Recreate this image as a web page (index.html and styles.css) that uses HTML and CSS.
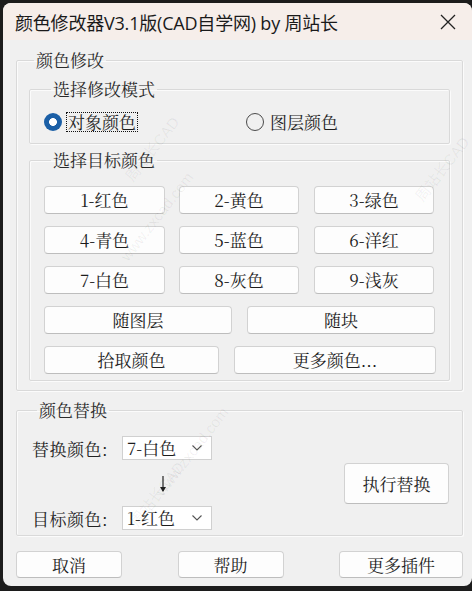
FILE: index.html
```html
<!DOCTYPE html>
<html lang="zh-CN">
<head>
<meta charset="utf-8">
<title>颜色修改器</title>
<link rel="stylesheet" href="styles.css">
</head>
<body>
<div class="window">
  <div class="titlebar">
    <span class="title">颜色修改器V3.1版(CAD自学网) by 周站长</span>
    <span class="close">
      <svg width="16" height="16" viewBox="0 0 16 16"><path d="M1 1 L15 15 M15 1 L1 15" stroke="#222" stroke-width="1.3" fill="none"/></svg>
    </span>
  </div>
  <div class="content">
    <fieldset class="group outer">
      <legend>颜色修改</legend>
      <fieldset class="group inner mode">
        <legend>选择修改模式</legend>
        <div class="radios">
          <label class="radio checked"><span class="dot"></span><span class="rlabel focus">对象颜色</span></label>
          <label class="radio"><span class="dot"></span><span class="rlabel">图层颜色</span></label>
        </div>
      </fieldset>
      <fieldset class="group inner target">
        <legend>选择目标颜色</legend>
        <div class="grid3">
          <button class="btn">1-红色</button>
          <button class="btn">2-黄色</button>
          <button class="btn">3-绿色</button>
          <button class="btn">4-青色</button>
          <button class="btn">5-蓝色</button>
          <button class="btn">6-洋红</button>
          <button class="btn">7-白色</button>
          <button class="btn">8-灰色</button>
          <button class="btn">9-浅灰</button>
        </div>
        <div class="grid2">
          <button class="btn">随图层</button>
          <button class="btn">随块</button>
        </div>
        <div class="grid2b">
          <button class="btn">拾取颜色</button>
          <button class="btn">更多颜色...</button>
        </div>
      </fieldset>
    </fieldset>

    <fieldset class="group replace">
      <legend>颜色替换</legend>
      <div class="replace-body">
        <div class="replace-form">
          <span class="flabel">替换颜色:</span>
          <div class="select"><span>7-白色</span><svg width="12" height="8" viewBox="0 0 12 8"><path d="M1.5 1.5 L6 6 L10.5 1.5" stroke="#555" stroke-width="1.1" fill="none"/></svg></div>
          <span></span>
          <div class="arrow"><svg width="10" height="18" viewBox="0 0 10 18"><path d="M5 1 V16" stroke="#222" stroke-width="1.2"/><path d="M2 12 L5 17 L8 12 Z" fill="#222"/></svg></div>
          <span class="flabel">目标颜色:</span>
          <div class="select"><span>1-红色</span><svg width="12" height="8" viewBox="0 0 12 8"><path d="M1.5 1.5 L6 6 L10.5 1.5" stroke="#555" stroke-width="1.1" fill="none"/></svg></div>
        </div>
        <button class="btn exec">执行替换</button>
      </div>
    </fieldset>

    <div class="footer">
      <button class="btn fbtn">取消</button>
      <button class="btn fbtn">帮助</button>
      <button class="btn fbtn wide">更多插件</button>
    </div>
  </div>

  <div class="wm wm1">www.zxcad.com</div>
  <div class="wm wm2">周站长CAD</div>
  <div class="wm wm3">www.zxcad.com</div>
  <div class="wm wm4">周站长CAD</div>
  <div class="wm wm5">周站长CAD</div>
</div>
</body>
</html>
```

FILE: styles.css
```css
* { box-sizing: border-box; }

html, body {
  margin: 0;
  padding: 0;
  background: #1c1c1c;
  width: 472px;
  height: 591px;
  overflow: hidden;
}

.window {
  position: relative;
  margin: 3px 0 0 3px;
  width: 469px;
  height: 583px;
  background: #f0f0f0;
  border-radius: 8px;
  overflow: hidden;
  font-family: "Noto Serif CJK SC", "Noto Sans CJK SC", serif;
  font-size: 17px;
  color: #1c1c1c;
}

.titlebar {
  height: 37px;
  background: #f6eeea;
  display: flex;
  align-items: center;
  justify-content: space-between;
  padding: 0 16px 0 12px;
}

.title {
  font-family: "Open Sans", "Noto Sans CJK SC", sans-serif;
  font-size: 18px;
  color: #1a1a1a;
  letter-spacing: -0.2px;
  padding-top: 1px;
}

.close {
  display: flex;
  width: 16px;
  height: 16px;
  margin-top: 1px;
}

.content {
  padding: 10px 9px 0 13px;
}

.group {
  margin: 0;
  border: 1px solid #d9d9d9;
  box-shadow: inset 1px 1px 0 #fbfbfb, 1px 1px 0 #fbfbfb;
  border-radius: 2px;
  min-width: 0;
}

.group > legend {
  padding: 0 2px;
  margin-left: 5px;
  line-height: 20px;
  height: 20px;
  color: #2a2a2a;
}

.outer {
  padding: 9px 12px 9px 12px;
}

.inner > legend {
  margin-left: 7px;
}

.mode {
  padding: 11px 14px 9px 14px;
}

.radios {
  display: flex;
  height: 24px;
  align-items: center;
}

.radio {
  display: flex;
  align-items: center;
  width: 202px;
  flex: none;
}

.dot {
  width: 18px;
  height: 18px;
  border-radius: 50%;
  border: 1px solid #4a4a4a;
  background: transparent;
  flex: none;
}

.radio.checked .dot {
  border: none;
  background: radial-gradient(circle, #ffffff 0 3.6px, #1b5fa6 4.2px);
}

.rlabel {
  margin-left: 4px;
  padding: 0 1px;
  line-height: 18px;
  border: 1px solid transparent;
}

.rlabel.focus {
  border: 1px dotted #111;
}

.target {
  margin-top: 6px;
  padding: 16px 14px 6px 14px;
}

.btn {
  font: inherit;
  color: #1c1c1c;
  background: #fdfdfd;
  border: 1px solid #d2d2d2;
  border-bottom-color: #bdbdbd;
  border-radius: 4px;
  height: 28px;
  padding: 0;
  line-height: 26px;
  text-align: center;
}

.grid3 {
  display: grid;
  grid-template-columns: 121px 120px 121px;
  column-gap: 14px;
  row-gap: 12px;
}

.grid3 .btn:nth-child(3n) { margin-left: 1px; }

.grid2 {
  display: grid;
  grid-template-columns: 188px 188px;
  column-gap: 15px;
  margin-top: 12px;
}

.grid2b {
  display: grid;
  grid-template-columns: 175px 202px;
  column-gap: 15px;
  margin-top: 12px;
}

.replace {
  margin-top: 9px;
  padding: 16px 13px 5px 15px;
}

.replace-body {
  display: flex;
  align-items: center;
  justify-content: space-between;
}

.replace-form {
  display: grid;
  grid-template-columns: 90px 90px;
  grid-template-rows: 24px 46px 24px;
  align-items: center;
}

.flabel {
  letter-spacing: 0.5px;
  color: #222;
}

.select {
  height: 24px;
  background: #ffffff;
  border: 1px solid #d0d0d0;
  display: flex;
  align-items: center;
  justify-content: space-between;
  padding: 0 8px 0 4px;
  line-height: 22px;
}

.arrow {
  display: flex;
  justify-content: center;
  padding-right: 8px;
  padding-top: 2px;
}

.exec {
  width: 105px;
  height: 41px;
  line-height: 39px;
  margin-top: 0;
}

.footer {
  display: flex;
  justify-content: space-between;
  margin-top: 15px;
}

.fbtn {
  width: 106px;
  height: 27px;
  line-height: 25px;
}

.fbtn.wide {
  width: 124px;
}

.wm {
  position: absolute;
  pointer-events: none;
  font-family: "Liberation Sans", "Noto Sans CJK SC", sans-serif;
  font-size: 15px;
  color: rgba(0, 0, 0, 0.06);
  transform: rotate(-52deg);
  white-space: nowrap;
}

.wm1 { left: 100px; top: 205px; }
.wm2 { left: 110px; top: 135px; }
.wm3 { left: 135px; top: 440px; }
.wm4 { left: 115px; top: 480px; }
.wm5 { left: 400px; top: 155px; }
```
